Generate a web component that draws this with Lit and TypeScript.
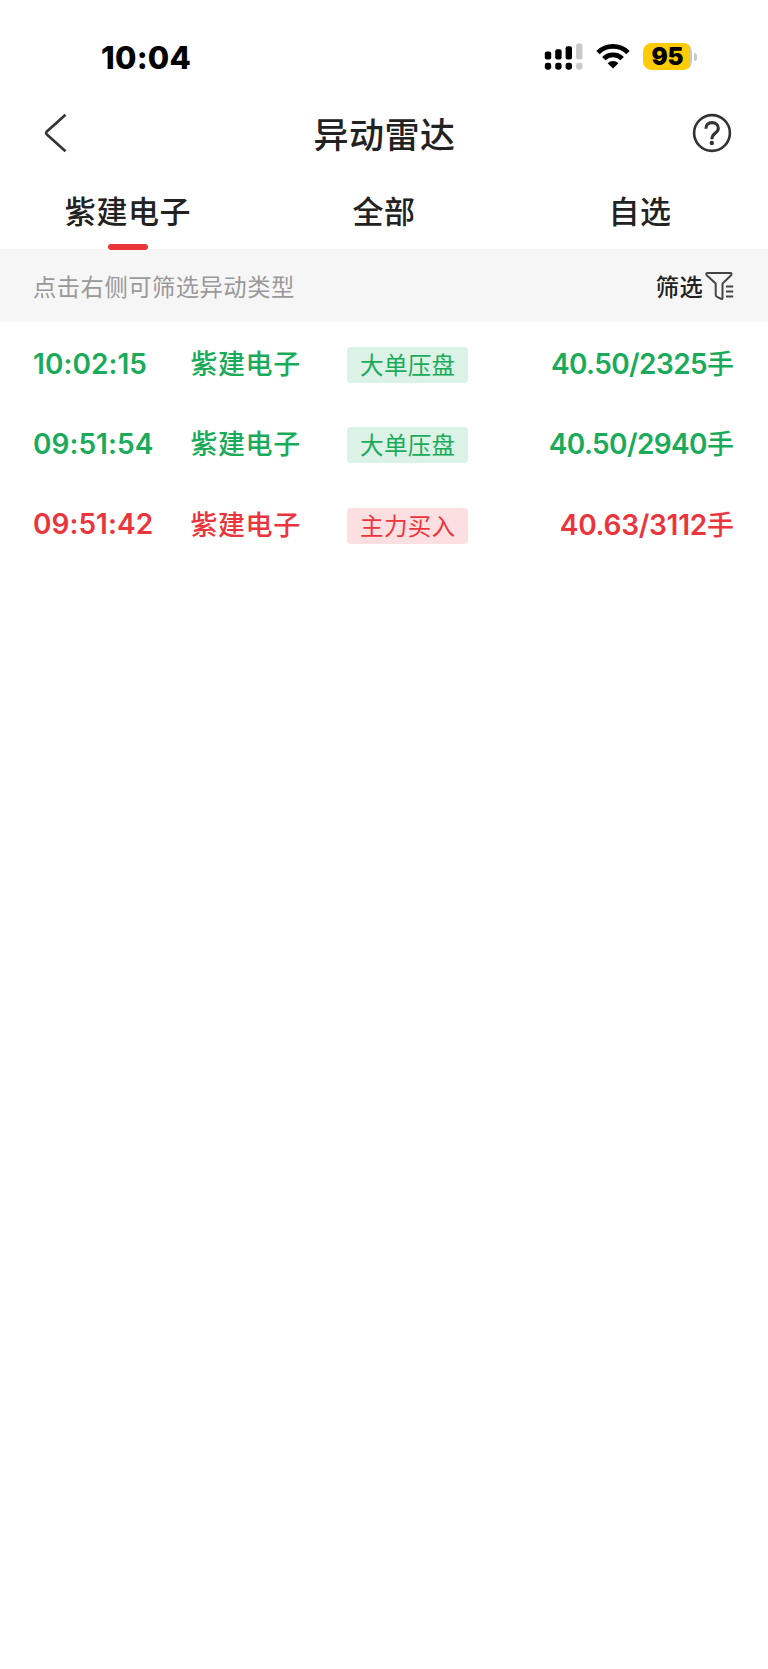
import { LitElement, html, css } from "lit";
import { customElement, property } from "lit/decorators.js";

type Tone = "down" | "up";
interface Alert { time: string; name: string; kind: string; value: string; tone: Tone; }

const ALERTS: Alert[] = [
  { time: "10:02:15", name: "紫建电子", kind: "大单压盘", value: "40.50/2325", tone: "down" },
  { time: "09:51:54", name: "紫建电子", kind: "大单压盘", value: "40.50/2940", tone: "down" },
  { time: "09:51:42", name: "紫建电子", kind: "主力买入", value: "40.63/3112", tone: "up" },
];

@customElement("status-bar")
class StatusBar extends LitElement {
  static styles = css`
    :host { display: flex; justify-content: space-between; align-items: center; height: 36px; padding: 39px 71px 21px 101px; color: #000; }
    .time { font-size: 31px; font-weight: 800; line-height: 36px; letter-spacing: 0.25px; padding-top: 1px; }
    .icons { display: flex; align-items: center; padding-bottom: 1px; }
    .signal { margin-right: 13px; }
    .wifi { margin-right: 13px; }
    .battery { display: flex; align-items: center; }
    .level { width: 49px; height: 26.5px; border-radius: 8.5px; background: linear-gradient(to right, #ffcc00 47.5px, #c9c9c9 47.5px); font-size: 24px; line-height: 27px; font-weight: 900; text-align: center; }
    .cap { width: 3px; height: 8px; margin-left: 2px; border-radius: 0 4px 4px 0; background: #c9c9c9; }
  `;
  render() {
    return html`
      <span class="time">10:04</span>
      <div class="icons">
        <svg class="signal" width="39" height="28" viewBox="0 0 39 28">
          <rect x="0.8" y="8.5" width="6.4" height="8" rx="2" />
          <rect x="11.2" y="6.3" width="6.4" height="10.2" rx="2" />
          <rect x="21.6" y="3.3" width="6.4" height="13.2" rx="2" />
          <rect x="32.1" y="0.5" width="6.4" height="16" rx="2" fill="#c9c9c9" />
          <rect x="0.8" y="19.7" width="6.4" height="7" rx="2.4" />
          <rect x="11.2" y="19.7" width="6.4" height="7" rx="2.4" />
          <rect x="21.6" y="19.7" width="6.4" height="7" rx="2.4" />
          <rect x="32.1" y="19.7" width="6.4" height="7" rx="2.4" fill="#c9c9c9" />
        </svg>
        <svg class="wifi" width="34" height="25" viewBox="0 0 34 25">
          <path d="M2 8.6a21.4 21.4 0 0 1 30 0M7.8 14.6a13.2 13.2 0 0 1 18.4 0" fill="none" stroke="#000" stroke-width="4.8" />
          <path d="M17 24.4l-5.4-5.1a7.6 7.6 0 0 1 10.8 0z" />
        </svg>
        <div class="battery"><div class="level">95</div><div class="cap"></div></div>
      </div>
    `;
  }
}

@customElement("alert-row")
class AlertRow extends LitElement {
  @property({ attribute: false }) alert!: Alert;
  static styles = css`
    :host { display: block; }
    .row { display: grid; grid-template-columns: 157.4px 157px 120.6px 1fr; align-items: center; height: 80.3px; padding: 0 34px 0 33px; font-size: 28px; font-weight: 600; }
    .time { padding-top: 2px; letter-spacing: 0.05px; }
    .down { color: #1aab5a; }
    .up { color: #eb353c; }
    .cjk { font-size: 27px; font-weight: 500; letter-spacing: 0.6px; }
    .tag { height: 36px; line-height: 37px; border-radius: 4px; text-align: center; font-size: 23.5px; font-weight: 400; letter-spacing: 0.3px; margin-top: 5px; }
    .down .tag { background: #dcf2e6; }
    .up .tag { background: #fce0e1; }
    .value { text-align: right; white-space: nowrap; letter-spacing: -0.6px; }
    .up .value { letter-spacing: -0.25px; }
    .value .cjk { letter-spacing: 0; }
  `;
  render() {
    const a = this.alert;
    return html`<div class="row ${a.tone}">
      <span class="time">${a.time}</span>
      <span class="cjk">${a.name}</span>
      <span class="tag">${a.kind}</span>
      <span class="value">${a.value}<span class="cjk">手</span></span>
    </div>`;
  }
}

@customElement("app-root")
class AppRoot extends LitElement {
  static styles = css`
    :host { display: block; min-height: 1669px; background: #fff; color: #222; font-family: Inter, "Noto Sans CJK SC", sans-serif; }
    .nav { display: grid; grid-template-columns: 1fr auto 1fr; align-items: center; height: 74px; padding: 0 36px 0 44px; }
    .title { font-size: 35px; font-weight: 500; line-height: 50px; letter-spacing: 0.5px; margin: 3px 7px 0 0; }
    .help { justify-self: end; }
    .tabs { display: grid; grid-template-columns: repeat(3, 1fr); height: 79.3px; }
    .tab { display: flex; flex-direction: column; align-items: center; justify-content: space-between; font-size: 31px; font-weight: 500; line-height: 46px; letter-spacing: 0.6px; padding-top: 19px; }
    .mark { width: 40px; height: 6px; border-radius: 3px; background: #eb353c; margin-bottom: -1px; z-index: 1; }
    .filter { display: flex; justify-content: space-between; align-items: center; height: 73.2px; padding: 0 34px 0 33px; background: #f6f6f6; }
    .hint { font-size: 23.3px; color: #999; letter-spacing: 0.5px; }
    .pick { display: flex; align-items: center; font-size: 23.3px; font-weight: 500; letter-spacing: 0.3px; gap: 2px; }
  `;
  render() {
    return html`
      <status-bar></status-bar>
      <header class="nav">
        <svg width="24" height="40" viewBox="0 0 24 40"><path d="M21.5 1.8L2.6 18.8q-1.2 1.2 0 2.4L21.5 38.2" fill="none" stroke="#333" stroke-width="2.6" /></svg>
        <span class="title">异动雷达</span>
        <svg class="help" width="40" height="40" viewBox="0 0 40 40">
          <circle cx="20" cy="20" r="17.9" fill="none" stroke="#333" stroke-width="2.6" />
          <path d="M13.9 15.8c0-4 2.5-6.2 6.1-6.2s6.3 2.2 6.3 5.6c0 2.4-1.4 3.7-3.2 5.1-2 1.6-3.2 2.8-3.2 5.9" fill="none" stroke="#333" stroke-width="3.1" />
          <circle cx="19.8" cy="30" r="2.2" fill="#333" />
        </svg>
      </header>
      <nav class="tabs">
        <div class="tab">紫建电子<span class="mark"></span></div>
        <div class="tab">全部</div>
        <div class="tab">自选</div>
      </nav>
      <div class="filter">
        <span class="hint">点击右侧可筛选异动类型</span>
        <span class="pick">筛选
          <svg width="29" height="30" viewBox="0 0 29 30" fill="none" stroke="#444" stroke-width="2">
            <path d="M2.3 2h23.2q1.8.5.6 2.2l-8.6 8.4v14.2q0 1.6-1.4 1.1l-4-2q-1.4-.8-1.4-2.4V12.6L1.7 4.2q-1.2-1.7.6-2.2z" stroke-linejoin="round" />
            <path d="M21 15.6h7.2M21 20.6h7.2M21 25.6h7.2" />
          </svg>
        </span>
      </div>
      <main>${ALERTS.map((a) => html`<alert-row .alert=${a}></alert-row>`)}</main>
    `;
  }
}
